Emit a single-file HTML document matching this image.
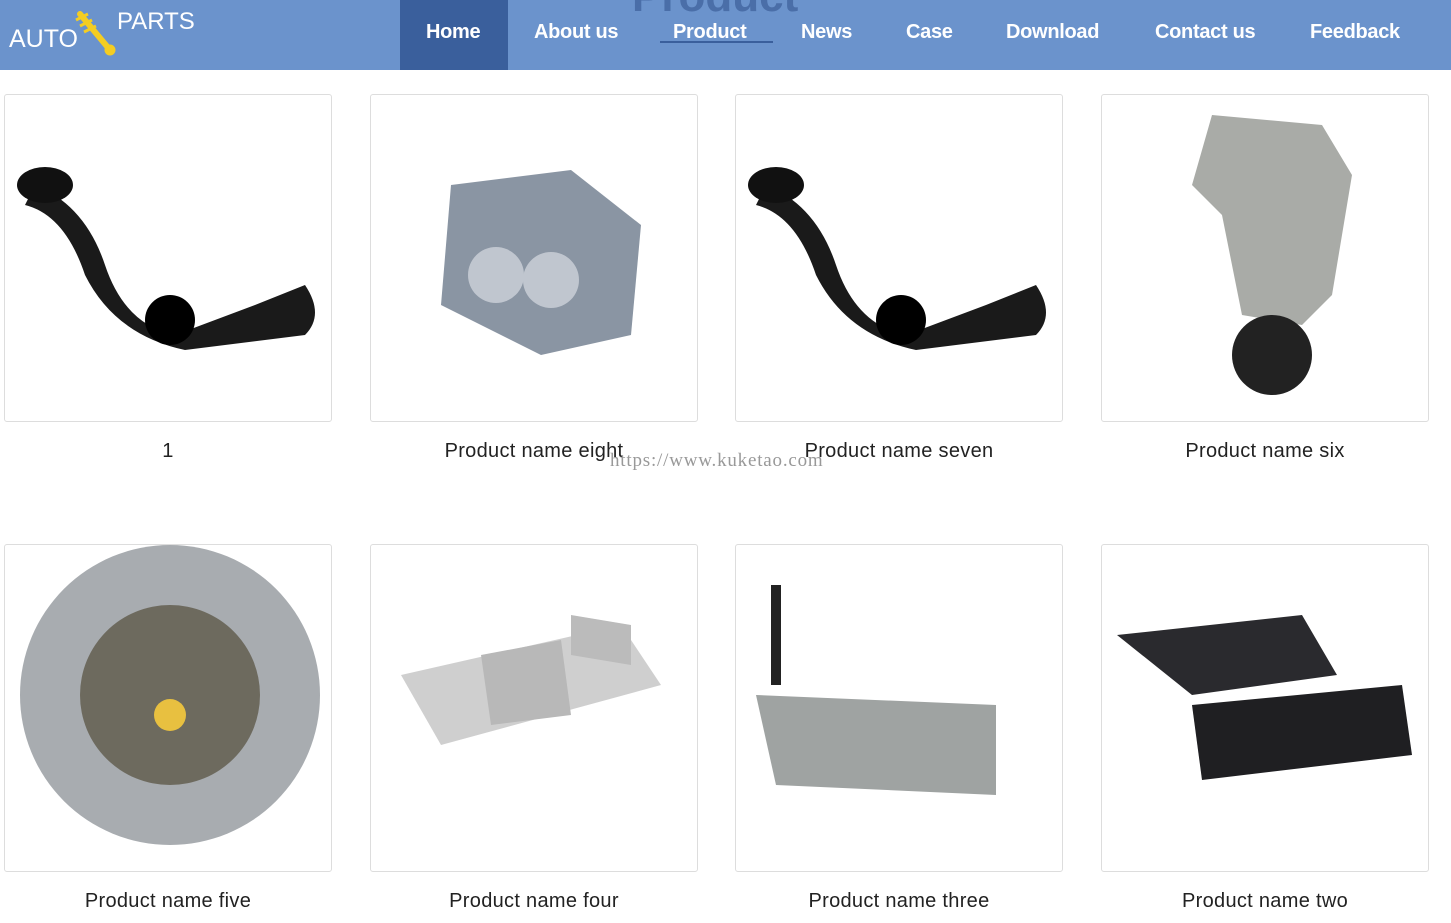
<!DOCTYPE html>
<html><head><meta charset="utf-8"><style>
body{margin:0;width:1451px;height:923px;overflow:hidden;background:#fff;font-family:"Liberation Sans",sans-serif;position:relative}
.hd{position:absolute;left:0;top:0;width:1451px;height:70px;background:#6b93cc}
.ghost{position:absolute;left:632px;top:-28px;font-size:44px;font-weight:bold;color:#4a6ea8;letter-spacing:0px}
.nav a{position:absolute;top:21px;color:#fff;font-weight:bold;font-size:20px;text-decoration:none;letter-spacing:-0.3px}
.home{position:absolute;left:400px;top:0;width:108px;height:70px;background:#3a5f9c}
.card{position:absolute;width:326px;height:326px;border:1px solid #ddd;border-radius:3px;background:#fff}
.lbl{position:absolute;width:328px;text-align:center;font-size:20px;color:#222;letter-spacing:0.3px}
</style></head><body>
<div class="hd"></div>
<div class="home"></div>
<div class="ghost">Product</div>
<div style="position:absolute;left:9px;top:25px;color:#fff;font-size:25px">AUTO</div>
<div style="position:absolute;left:117px;top:8px;color:#fff;font-size:24px">PARTS</div>
<svg style="position:absolute;left:72px;top:8px" width="48" height="48"><path d="M8 6 L38 42" stroke="#f4cd22" stroke-width="6" stroke-linecap="round"/><path d="M4 12l12-6M8 18l12-6M12 24l12-6" stroke="#f4cd22" stroke-width="3"/><circle cx="38" cy="42" r="4" fill="none" stroke="#f4cd22" stroke-width="3"/></svg>
<div class="nav">
<a style="left:426px">Home</a><a style="left:534px">About us</a><a style="left:673px">Product</a><a style="left:801px">News</a><a style="left:906px">Case</a><a style="left:1006px">Download</a><a style="left:1155px">Contact us</a><a style="left:1310px">Feedback</a></div>
<div style="position:absolute;left:660px;top:41px;width:113px;height:2px;background:#3a5f9c"></div>

<div class="card" style="left:4px;top:94px"><svg width="326" height="326"><path d="M30 90 Q80 110 100 170 Q120 230 170 240 L250 210 L300 190 Q320 220 300 240 L180 255 Q110 240 80 180 Q60 120 20 110Z" fill="#1a1a1a"/><circle cx="165" cy="225" r="25" fill="#000"/><ellipse cx="40" cy="90" rx="28" ry="18" fill="#111"/></svg></div>
<div class="card" style="left:370px;top:94px"><svg width="326" height="326"><path d="M80 90 L200 75 L270 130 L260 240 L170 260 L70 210Z" fill="#8a95a3"/><circle cx="125" cy="180" r="28" fill="#c0c6cf"/><circle cx="180" cy="185" r="28" fill="#c0c6cf"/></svg></div>
<div class="card" style="left:735px;top:94px"><svg width="326" height="326"><path d="M30 90 Q80 110 100 170 Q120 230 170 240 L250 210 L300 190 Q320 220 300 240 L180 255 Q110 240 80 180 Q60 120 20 110Z" fill="#1a1a1a"/><circle cx="165" cy="225" r="25" fill="#000"/><ellipse cx="40" cy="90" rx="28" ry="18" fill="#111"/></svg></div>
<div class="card" style="left:1101px;top:94px"><svg width="326" height="326"><path d="M110 20 L220 30 L250 80 L230 200 L200 230 L140 220 L120 120 L90 90Z" fill="#a9aba7"/><circle cx="170" cy="260" r="40" fill="#222"/></svg></div>
<div class="lbl" style="left:4px;top:440px">1</div>
<div class="lbl" style="left:370px;top:440px">Product name eight</div>
<div class="lbl" style="left:735px;top:440px">Product name seven</div>
<div class="lbl" style="left:1101px;top:440px">Product name six</div>
<div style="position:absolute;left:610px;top:450px;font-size:19px;color:#999;letter-spacing:0.8px;font-family:'Liberation Serif',serif">https://www.kuketao.com</div>

<div class="card" style="left:4px;top:544px"><svg width="326" height="326"><circle cx="165" cy="150" r="150" fill="#a8acb0"/><circle cx="165" cy="150" r="90" fill="#6d6a5e"/><circle cx="165" cy="170" r="16" fill="#e8c040"/></svg></div>
<div class="card" style="left:370px;top:544px"><svg width="326" height="326"><path d="M30 130 L250 80 L290 140 L70 200Z" fill="#cfcfcf"/><path d="M110 110 L190 95 L200 170 L120 180Z" fill="#b8b8b8"/><path d="M200 70 L260 80 L260 120 L200 110Z" fill="#bbb"/></svg></div>
<div class="card" style="left:735px;top:544px"><svg width="326" height="326"><rect x="35" y="40" width="10" height="100" fill="#222"/><path d="M20 150 L260 160 L260 250 L40 240Z" fill="#9fa3a2"/></svg></div>
<div class="card" style="left:1101px;top:544px"><svg width="326" height="326"><path d="M15 90 L200 70 L235 130 L90 150Z" fill="#2a2a2e"/><path d="M90 160 L300 140 L310 210 L100 235Z" fill="#1f1f22"/></svg></div>
<div class="lbl" style="left:4px;top:890px">Product name five</div>
<div class="lbl" style="left:370px;top:890px">Product name four</div>
<div class="lbl" style="left:735px;top:890px">Product name three</div>
<div class="lbl" style="left:1101px;top:890px">Product name two</div>
</body></html>
